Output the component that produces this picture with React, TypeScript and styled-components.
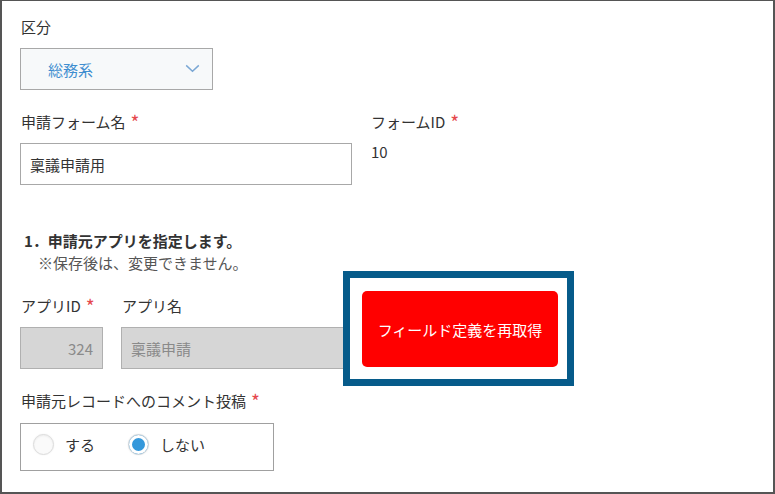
import { ReactElement } from 'react';
import styled, { createGlobalStyle } from 'styled-components';

const GlobalStyle = createGlobalStyle`
html, body {
    margin: 0;
    padding: 0;
    background: #ffffff;
}
body {
    font-family: "Noto Sans CJK JP", "Liberation Sans", sans-serif;
    color: #333333;
}
`;

export default function App(): ReactElement {
    return (
        <>
            <GlobalStyle />
            <Page>
                <Field>
                    <Label>区分</Label>
                    <Select>
                        <SelectText>総務系</SelectText>
                        <Chevron viewBox="0 0 16 10" width="15" height="9">
                            <polyline points="1,1.5 8,8 15,1.5" fill="none" stroke="#7aa7d4" strokeWidth="1.6" />
                        </Chevron>
                    </Select>
                </Field>

                <Row $gap={18} $top={22}>
                    <Field>
                        <Label>申請フォーム名<Required>*</Required></Label>
                        <TextInput $width={332}>稟議申請用</TextInput>
                    </Field>
                    <Field>
                        <Label>フォームID<Required>*</Required></Label>
                        <Value>10</Value>
                    </Field>
                </Row>

                <Section>
                    <Heading>1．申請元アプリを指定します。</Heading>
                    <Note>※保存後は、変更できません。</Note>
                </Section>

                <Row $gap={18} $top={22}>
                    <Field>
                        <Label>アプリID<Required>*</Required></Label>
                        <TextInput $width={83} $disabled $align="right">324</TextInput>
                    </Field>
                    <Field>
                        <Label>アプリ名</Label>
                        <TextInput $width={232} $disabled>稟議申請</TextInput>
                    </Field>
                    <HighlightFrame>
                        <RefetchButton>フィールド定義を再取得</RefetchButton>
                    </HighlightFrame>
                </Row>

                <Field $top={22}>
                    <Label>申請元レコードへのコメント投稿<Required>*</Required></Label>
                    <RadioGroup>
                        <RadioOption>
                            <Radio />
                            <span>する</span>
                        </RadioOption>
                        <RadioOption>
                            <Radio $checked />
                            <span>しない</span>
                        </RadioOption>
                    </RadioGroup>
                </Field>
            </Page>
        </>
    );
}

const Page = styled.div`
box-sizing: border-box;
width: 775px;
height: 494px;
border: 2px solid #555555;
border-top-width: 1px;
padding: 16px 0 0 18px;
display: flex;
flex-direction: column;
overflow: hidden;
`;

const Field = styled.div<{ $top?: number }>`
display: flex;
flex-direction: column;
margin-top: ${p => p.$top ?? 0}px;
`;

const Row = styled.div<{ $gap: number; $top: number }>`
display: flex;
align-items: flex-start;
gap: ${p => p.$gap}px;
margin-top: ${p => p.$top}px;
`;

const Label = styled.div`
font-size: 15px;
line-height: 20px;
height: 20px;
color: #333333;
margin-bottom: 11px;
margin-left: 1px;
white-space: nowrap;
`;

const Required = styled.span`
color: #e5484d;
font-size: 19px;
margin-left: 5px;
vertical-align: -2px;
`;

const Select = styled.div`
box-sizing: border-box;
width: 193px;
height: 42px;
background: #f7f9fa;
border: 1px solid #a8a8a8;
display: flex;
align-items: center;
justify-content: space-between;
padding: 0 12px 0 27px;
`;

const SelectText = styled.span`
font-size: 15px;
color: #3f8ed0;
`;

const Chevron = styled.svg`
display: block;
margin-top: -1px;
`;

const TextInput = styled.div<{ $width: number; $disabled?: boolean; $align?: string }>`
box-sizing: border-box;
width: ${p => p.$width}px;
height: 42px;
border: 1px solid ${p => (p.$disabled ? '#b0b0b0' : '#a8a8a8')};
background: ${p => (p.$disabled ? '#d6d6d6' : '#ffffff')};
color: ${p => (p.$disabled ? '#8a8a8a' : '#333333')};
font-size: 15px;
display: flex;
align-items: center;
justify-content: ${p => (p.$align === 'right' ? 'flex-end' : 'flex-start')};
padding: 0 9px;
`;

const Value = styled.div`
font-size: 15px;
line-height: 20px;
margin-left: 1px;
margin-top: -1px;
`;

const Section = styled.div`
display: flex;
flex-direction: column;
margin-top: 45px;
`;

const Heading = styled.div`
font-size: 15px;
font-weight: bold;
line-height: 22px;
margin-left: 4px;
color: #333333;
`;

const Note = styled.div`
font-size: 15px;
line-height: 22px;
margin-left: 18px;
color: #555555;
`;

const HighlightFrame = styled.div`
position: relative;
z-index: 1;
box-sizing: border-box;
width: 231px;
height: 115px;
margin: -25px 0 -17px -28px;
border: 7px solid #065b8a;
background: #ffffff;
padding: 13px 9px 12px 12px;
display: flex;
`;

const RefetchButton = styled.button`
flex: 1;
border: none;
border-radius: 5px;
background: #ff0000;
color: #ffffff;
font-family: "Noto Sans CJK JP", "Liberation Sans", sans-serif;
font-size: 15px;
cursor: pointer;
`;

const RadioGroup = styled.div`
box-sizing: border-box;
width: 254px;
height: 48px;
margin-top: 1px;
border: 1px solid #a0a0a0;
display: flex;
align-items: center;
gap: 33px;
padding: 0 0 6px 12px;
`;

const RadioOption = styled.label`
display: flex;
align-items: center;
gap: 11px;
font-size: 15px;
color: #333333;
`;

const Radio = styled.span<{ $checked?: boolean }>`
box-sizing: border-box;
width: 21px;
height: 21px;
border-radius: 50%;
border: 1px solid #dcdcdc;
background: ${p => (p.$checked ? '#3498db' : '#fafafa')};
box-shadow: ${p => (p.$checked ? 'inset 0 0 0 3px #ffffff, 0 0 2px rgba(0,0,0,0.08)' : 'inset 0 1px 2px rgba(0,0,0,0.05), 0 0 2px rgba(0,0,0,0.06)')};
`;
